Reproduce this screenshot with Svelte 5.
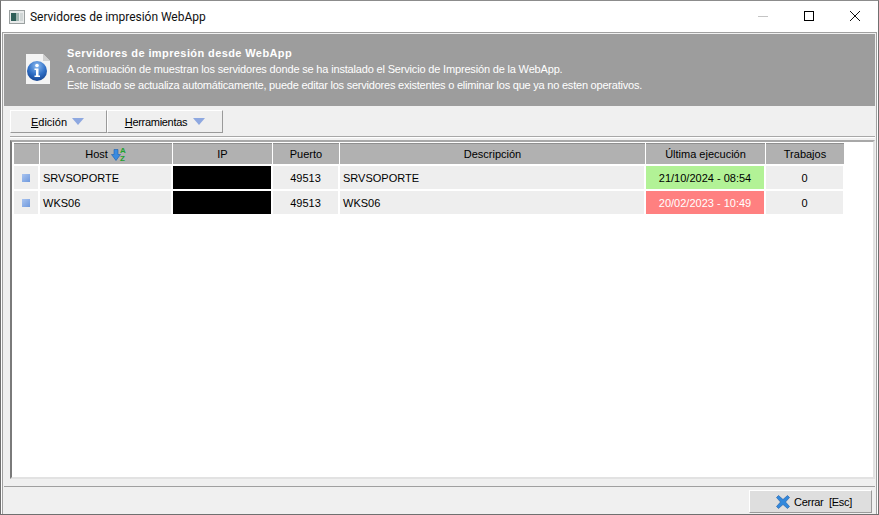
<script>
    const columns = [
        { label: 'Host', cls: 'c-host', sort: true },
        { label: 'IP', cls: 'c-ip' },
        { label: 'Puerto', cls: 'c-port' },
        { label: 'Descripción', cls: 'c-desc' },
        { label: 'Última ejecución', cls: 'c-last' },
        { label: 'Trabajos', cls: 'c-jobs' }
    ];

    const rows = [
        { host: 'SRVSOPORTE', port: '49513', desc: 'SRVSOPORTE', last: '21/10/2024 - 08:54', state: 'ok', jobs: '0' },
        { host: 'WKS06', port: '49513', desc: 'WKS06', last: '20/02/2023 - 10:49', state: 'bad', jobs: '0' }
    ];
</script>

<div class="window">
    <header class="titlebar">
        <svg class="app-icon" width="16" height="14" viewBox="0 0 16 14">
            <rect x="0.5" y="0.5" width="15" height="13" fill="#e8eaea" stroke="#9aa0a0" />
            <rect x="2" y="3" width="5" height="8" fill="#2f5f58" />
            <rect x="7" y="3" width="3" height="8" fill="#9fb5b0" />
            <rect x="11" y="3" width="3" height="8" fill="#d0d6d6" />
        </svg>
        <span class="title">Servidores de impresión WebApp</span>
        <div class="win-buttons">
            <svg width="46" height="32" viewBox="0 0 46 32"><path d="M18 15.5h10" stroke="#c4c4c4" /></svg>
            <svg width="46" height="32" viewBox="0 0 46 32"><rect x="18.5" y="10.5" width="9" height="9" fill="none" stroke="#000" /></svg>
            <svg width="46" height="32" viewBox="0 0 46 32"><path d="M18 10l10 10M28 10l-10 10" stroke="#111" fill="none" /></svg>
        </div>
    </header>

    <div class="form">
        <section class="banner">
            <svg class="info-icon" width="24" height="30" viewBox="0 0 24 30">
                <defs>
                    <radialGradient id="ball" cx="50%" cy="25%" r="80%">
                        <stop offset="0%" stop-color="#8fbcf0" />
                        <stop offset="55%" stop-color="#2f6fc6" />
                        <stop offset="100%" stop-color="#123f8c" />
                    </radialGradient>
                </defs>
                <path d="M0 0h17l7 7v23H0z" fill="#f4f4f4" />
                <path d="M17 0l7 7h-7z" fill="#d0d0d0" />
                <circle cx="11" cy="17" r="10" fill="url(#ball)" />
                <circle cx="11" cy="11.500" r="1.800" fill="#fff" />
                <path d="M8.500 14.500h4v7h1.500v1.500H8.500v-1.500H10v-5.500H8.500z" fill="#fff" />
            </svg>
            <div class="banner-text">
                <strong>Servidores de impresión desde WebApp</strong>
                <span>A continuación de muestran los servidores donde se ha instalado el Servicio de Impresión de la WebApp.</span>
                <span class="long">Este listado se actualiza automáticamente, puede editar los servidores existentes o eliminar los que ya no esten operativos.</span>
            </div>
        </section>

        <nav class="toolbar">
            <button class="tool tool-edit"><span><u>E</u>dición</span><i class="caret"></i></button>
            <button class="tool tool-tools"><span class="tight"><u>H</u>erramientas</span><i class="caret"></i></button>
        </nav>
        <div class="separator"></div>

        <div class="grid-frame">
            <div class="grid-row head">
                <div class="cell c-mark"></div>
                {#each columns as col}
                    <div class="cell center {col.cls}">
                        {col.label}
                        {#if col.sort}
                            <svg class="sort" width="16" height="17" viewBox="0 0 16 17">
                                <path d="M3 3.500h4v5h2.500l-4.500 6-4.500-6H3z" fill="#3b8be0" stroke="#1d5fb0" stroke-width="0.6" />
                                <text x="9" y="7" class="az">A</text>
                                <text x="9" y="15" class="az">Z</text>
                            </svg>
                        {/if}
                    </div>
                {/each}
            </div>
            {#each rows as row}
                <div class="grid-row data">
                    <div class="cell c-mark center"><i class="mark"></i></div>
                    <div class="cell c-host">{row.host}</div>
                    <div class="cell c-ip masked"></div>
                    <div class="cell c-port center">{row.port}</div>
                    <div class="cell c-desc">{row.desc}</div>
                    <div class="cell c-last center {row.state}">{row.last}</div>
                    <div class="cell c-jobs center">{row.jobs}</div>
                </div>
            {/each}
        </div>

        <footer class="footer">
            <button class="close">
                <svg width="14" height="14" viewBox="0 0 14 14">
                    <path d="M2.500 .5L7 4.500 11.500 .5l2 2L9.500 7l4 4.500-2 2L7 9.500l-4.500 4-2-2L4.500 7 .5 2.500z" fill="#3288dc" stroke="#1c5da6" stroke-width="0.6" />
                </svg>
                <span class="tight">Cerrar&nbsp; [Esc]</span>
            </button>
        </footer>
    </div>
</div>

<style>
    :global(body) {
        margin: 0;
        background: #fff;
    }

    .window {
        width: 879px;
        height: 515px;
        box-sizing: border-box;
        display: flex;
        flex-direction: column;
        border: 1px solid #707070;
        border-top-color: #8c8c8c;
        background: #fff;
        font-family: 'Liberation Sans', Arial, sans-serif;
        font-size: 11px;
        color: #000;
        overflow: hidden;
    }

    /* barra de titulo */
    .titlebar {
        height: 31px;
        flex: none;
        display: flex;
        align-items: center;
        padding-left: 8px;
    }

    .app-icon { margin-right: 5px; }

    .title {
        font-family: Roboto, sans-serif;
        font-size: 12px;
        letter-spacing: -0.03px;
        color: #111;
    }

    .win-buttons {
        margin-left: auto;
        display: flex;
    }

    .win-buttons svg { display: block; }

    /* contenido */
    .form {
        flex: 1;
        min-height: 0;
        display: flex;
        flex-direction: column;
        background: #f0f0f0;
        border: 1px solid #a0a0a0;
        border-bottom: none;
        margin-left: 1px;
        margin-right: 1px;
        padding: 1px;
    }

    .banner {
        height: 72px;
        flex: none;
        display: flex;
        align-items: center;
        background: #9d9d9d;
        color: #fff;
        padding-left: 22px;
        box-sizing: border-box;
    }

    .info-icon {
        margin: -2px 17px 0 0;
    }

    .banner-text {
        display: flex;
        flex-direction: column;
        line-height: 16px;
        margin-top: -2px;
        letter-spacing: -0.17px;
    }

    .banner-text .long { letter-spacing: -0.22px; }

    .banner-text strong {
        font-weight: 700;
        letter-spacing: 0.4px;
    }

    .toolbar {
        display: flex;
        height: 23px;
        margin: 4px 0 0 6px;
        flex: none;
    }

    .tool {
        display: flex;
        align-items: center;
        justify-content: center;
        gap: 6px;
        height: 23px;
        padding: 0;
        background: #efefef;
        border: 1px solid;
        border-color: #fff #9a9a9a #9a9a9a #fff;
        font: inherit;
        color: #000;
    }

    .tool-edit {
        width: 97px;
        gap: 5px;
        padding-right: 2px;
    }

    .tool-tools { width: 116px; }

    .tight { letter-spacing: -0.3px; }

    .caret {
        width: 0;
        height: 0;
        border-left: 6px solid transparent;
        border-right: 6px solid transparent;
        border-top: 7px solid #8ea8e0;
    }

    .separator {
        flex: none;
        height: 1px;
        margin: 3px 0 0 6px;
        background: #a8a8a8;
        border-bottom: 1px solid #fff;
    }

    .grid-frame {
        flex: 1;
        min-height: 0;
        margin: 2px 0 7px 6px;
        background: #fff;
        border-top: 2px solid #a8a8a8;
        border-left: 2px solid #7a7a7a;
        border-right: 2px solid #e2e2e2;
        border-bottom: 2px solid #e2e2e2;
        padding: 1px 0 0 2px;
    }

    .grid-row {
        display: flex;
        gap: 1px;
    }

    .grid-row.head {
        height: 21px;
        margin-bottom: 2px;
    }

    .grid-row.data {
        height: 23px;
        margin-bottom: 2px;
    }

    .cell {
        display: flex;
        align-items: center;
        box-sizing: border-box;
        padding-left: 3px;
        background: #eee;
        white-space: nowrap;
    }

    .data .cell {
        background-clip: padding-box;
        border-right: 1px solid transparent;
    }

    .head .cell {
        background: #b1b1b1;
        border-top: 1px solid #8f8f8f;
    }

    .center {
        justify-content: center;
        padding-left: 0;
    }

    .c-mark { width: 25px; }
    .c-host { width: 132px; }
    .c-ip { width: 99px; }
    .c-port { width: 66px; }
    .c-desc { width: 305px; }
    .c-last { width: 119px; }
    .c-jobs { width: 78px; }

    .data .masked { background: #000; background-clip: padding-box; }
    .data .ok { background: #b2f296; background-clip: padding-box; }
    .data .bad { background: #ff8080; background-clip: padding-box; color: #fff; }

    .mark {
        width: 8px;
        height: 8px;
        background: linear-gradient(135deg, #a9c4f0, #6f99dd);
    }

    .sort { margin-left: 3px; }

    .az {
        font-size: 8px;
        font-weight: 700;
        fill: #1fa22e;
    }

    /* pie */
    .footer {
        height: 26px;
        flex: none;
        display: flex;
        justify-content: flex-end;
        align-items: flex-end;
        border-top: 1px solid #a0a0a0;
    }

    .close {
        width: 123px;
        height: 23px;
        margin-right: 3px;
        display: flex;
        align-items: center;
        justify-content: center;
        gap: 4px;
        padding: 0 0 0 7px;
        background: #dedede;
        border: 1px solid;
        border-color: #fff #9a9a9a #9a9a9a #fff;
        font: inherit;
        color: #000;
    }
</style>
